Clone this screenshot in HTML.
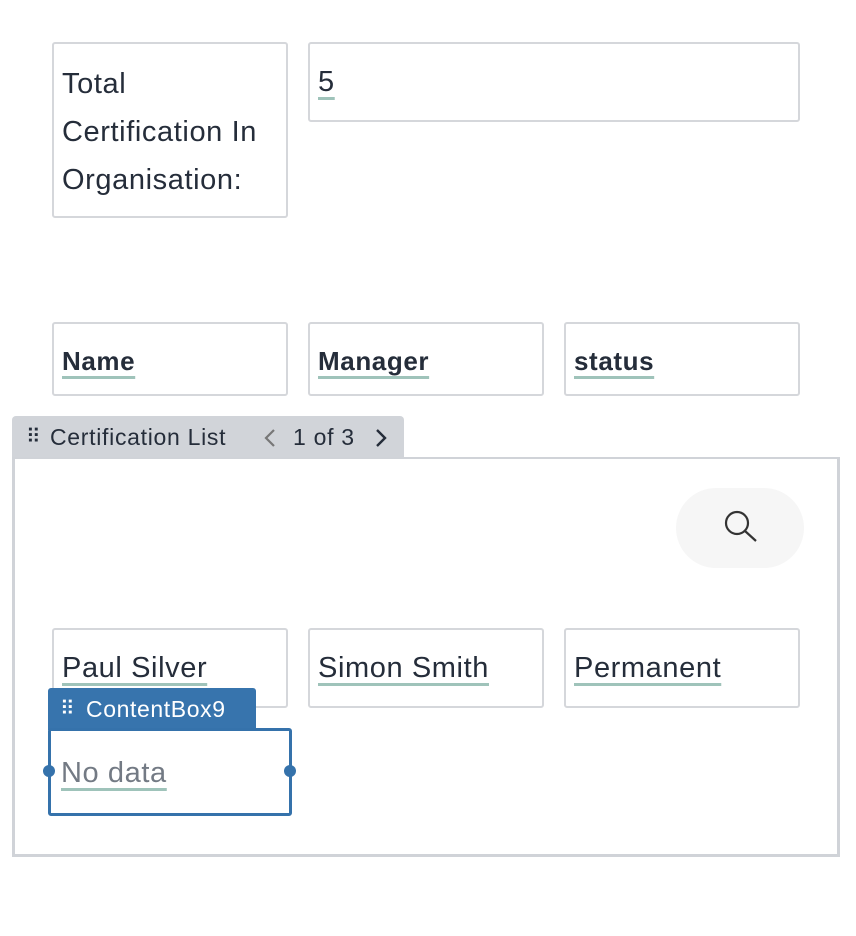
<!DOCTYPE html>
<html><head><style>
body{margin:0;width:856px;height:936px;background:#fff;font-family:"Liberation Sans",sans-serif;color:#252d3a;position:relative;overflow:hidden}
.b{position:absolute;border:2px solid #d5d7db;border-radius:3px;box-sizing:border-box;font-size:29px;letter-spacing:0.6px;padding-left:8px;white-space:nowrap}
.u{text-decoration:underline;text-decoration-color:#9fc3ba;text-decoration-thickness:3px;text-underline-offset:6px}
.a{position:absolute}
</style></head><body>
<div class="b" style="left:52px;top:42px;width:236px;height:176px;line-height:48px;padding-top:16px">Total<br>Certification In<br>Organisation:</div>
<div class="b" style="left:308px;top:42px;width:492px;height:80px;padding-top:22px"><span class="u">5</span></div>
<div class="b" style="left:52px;top:322px;width:236px;height:74px;padding-top:22px;font-size:26px;font-weight:bold"><span class="u">Name</span></div>
<div class="b" style="left:308px;top:322px;width:236px;height:74px;padding-top:22px;font-size:26px;font-weight:bold"><span class="u">Manager</span></div>
<div class="b" style="left:564px;top:322px;width:236px;height:74px;padding-top:22px;font-size:26px;font-weight:bold"><span class="u">status</span></div>
<div class="a" style="left:12px;top:416px;width:392px;height:42px;background:#d1d4d9;border-radius:4px 4px 0 0;font-size:23px;line-height:42px;letter-spacing:0.7px">
<span style="position:absolute;left:14px;top:0;font-size:20px;letter-spacing:-1px">⠿</span>
<span style="position:absolute;left:38px">Certification List</span>
<svg class="a" style="left:250px;top:12px" width="16" height="20"><polyline points="12,2 4,10 12,18" fill="none" stroke="#777" stroke-width="2.2"/></svg>
<span style="position:absolute;left:281px">1 of 3</span>
<svg class="a" style="left:361px;top:12px" width="16" height="20"><polyline points="4,2 12,10 4,18" fill="none" stroke="#252d3a" stroke-width="2.4"/></svg>
</div>
<div class="a" style="left:12px;top:457px;width:828px;height:400px;border:3px solid #d0d3d8;border-top-width:2px;box-sizing:border-box"></div>
<div class="a" style="left:676px;top:488px;width:128px;height:80px;background:#f6f6f6;border-radius:40px">
<svg width="128" height="80"><circle cx="61" cy="35" r="11" fill="none" stroke="#333" stroke-width="2.2"/><line x1="69" y1="43" x2="80" y2="53" stroke="#333" stroke-width="2.2"/></svg></div>
<div class="b" style="left:52px;top:628px;width:236px;height:80px;padding-top:22px"><span class="u">Paul Silver</span></div>
<div class="b" style="left:308px;top:628px;width:236px;height:80px;padding-top:22px"><span class="u">Simon Smith</span></div>
<div class="b" style="left:564px;top:628px;width:236px;height:80px;padding-top:22px"><span class="u">Permanent</span></div>
<div class="a" style="left:48px;top:688px;width:208px;height:42px;background:#3774ad;border-radius:3px 3px 0 0;color:#fff;font-size:23px;line-height:42px;letter-spacing:0.6px">
<span style="position:absolute;left:12px;font-size:20px">⠿</span><span style="position:absolute;left:38px">ContentBox9</span></div>
<div class="a" style="left:48px;top:728px;width:244px;height:88px;border:3px solid #3572ab;border-radius:3px;box-sizing:border-box;background:#fff;font-size:29px;letter-spacing:0.6px;color:#737a84;padding:26px 0 0 10px"><span class="u">No data</span></div>
<div class="a" style="left:43px;top:765px;width:12px;height:12px;border-radius:50%;background:#3572ab"></div>
<div class="a" style="left:284px;top:765px;width:12px;height:12px;border-radius:50%;background:#3572ab"></div>
</body></html>
